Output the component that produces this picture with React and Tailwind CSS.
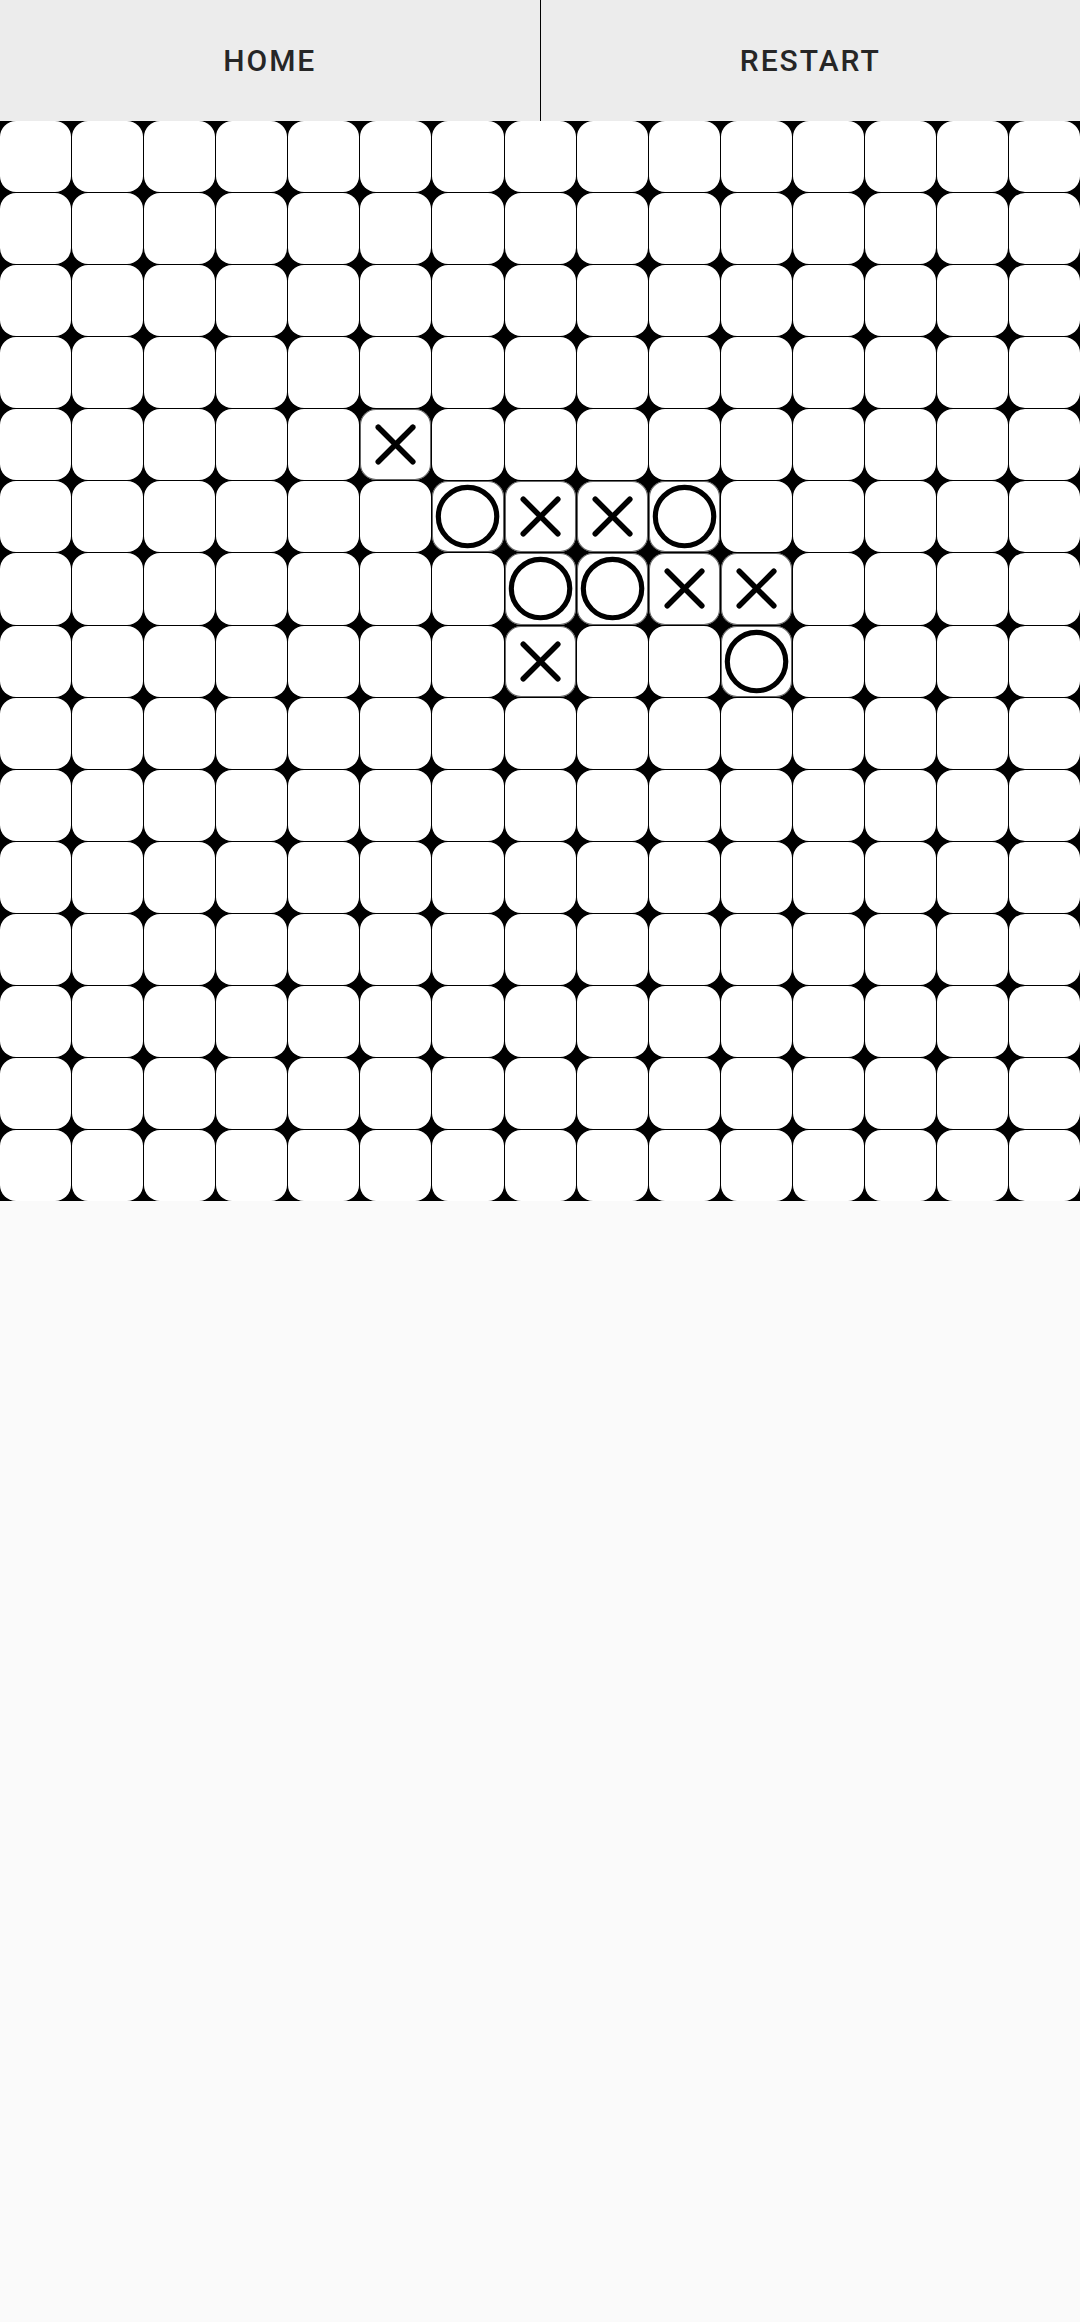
import React from "react";

const marks = {
  "4-5": "X",
  "5-6": "O",
  "5-7": "X",
  "5-8": "X",
  "5-9": "O",
  "6-7": "O",
  "6-8": "O",
  "6-9": "X",
  "6-10": "X",
  "7-7": "X",
  "7-10": "O",
};

function Mark({ type }) {
  if (type === "X") {
    return (
      <svg viewBox="0 0 72 72" className="w-full h-full block">
        <line x1="18.5" y1="18.5" x2="53.5" y2="53.5" stroke="black" strokeWidth="5.6" strokeLinecap="round" />
        <line x1="53.5" y1="18.5" x2="18.5" y2="53.5" stroke="black" strokeWidth="5.6" strokeLinecap="round" />
      </svg>
    );
  }
  return (
    <svg viewBox="0 0 72 72" className="w-full h-full block">
      <circle cx="36" cy="36" r="29.6" fill="none" stroke="black" strokeWidth="5.2" />
    </svg>
  );
}

export default function App() {
  const cells = [];
  for (let r = 0; r < 15; r++) {
    for (let c = 0; c < 15; c++) {
      const m = marks[`${r}-${c}`];
      cells.push(
        <div
          key={`${r}-${c}`}
          className={
            m
              ? "aspect-square bg-white rounded-[16px] ring-1 ring-inset ring-black/60"
              : "aspect-square bg-white rounded-[16px]"
          }
        >
          {m ? <Mark type={m} /> : null}
        </div>
      );
    }
  }

  return (
    <div
      className="w-[1080px] min-h-[2322px] bg-[#fafafa]"
      style={{ fontFamily: "Roboto, 'Liberation Sans', sans-serif" }}
    >
      <div className="flex h-[121px] bg-[#ececec]">
        <div className="flex-1 flex items-center justify-center text-[30px] font-medium tracking-[2px] text-[#262626]">
          HOME
        </div>
        <div className="w-px bg-black" />
        <div className="flex-1 flex items-center justify-center text-[30px] font-medium tracking-[2px] text-[#262626]">
          RESTART
        </div>
      </div>
      <div className="grid grid-cols-[repeat(15,1fr)] gap-px bg-black">
        {cells}
      </div>
    </div>
  );
}
